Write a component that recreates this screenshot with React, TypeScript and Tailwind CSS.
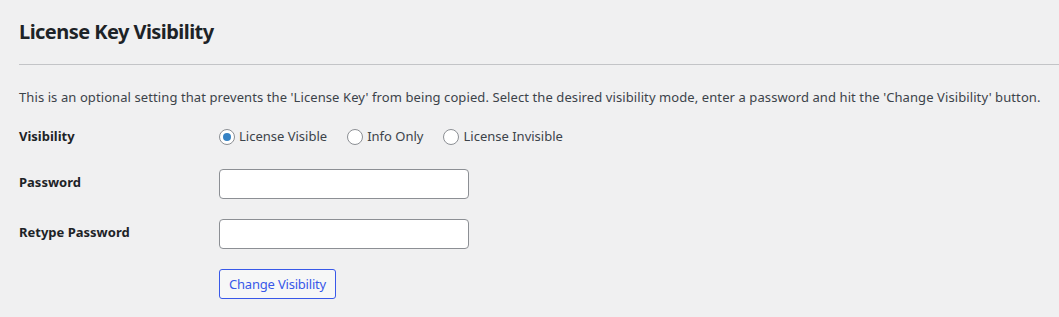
import React from "react";

function Radio({ label, checked }: { label: string; checked?: boolean }) {
  return (
    <label className="flex items-center gap-[4px] mr-[20px]">
      <span className="w-[16px] h-[16px] rounded-full border border-[#8c8f94] bg-white flex items-center justify-center">
        {checked && <span className="w-[8px] h-[8px] rounded-full bg-[#3582c4]" />}
      </span>
      <span>{label}</span>
    </label>
  );
}

export default function App() {
  return (
    <div
      className="w-[1059px] h-[317px] bg-[#f0f0f1] text-[13px] text-[#3c434a] overflow-hidden pl-[19px]"
      style={{ fontFamily: '"Noto Sans", sans-serif' }}
    >
      <h2 className="pt-[18px] text-[20px] leading-[28px] font-bold tracking-[-0.55px] text-[#1d2327]">License Key Visibility</h2>
      <div className="mt-[18px] h-px bg-[#c3c4c7]" />
      <p className="mt-[22px] leading-[20px] tracking-[0.09px]">
        This is an optional setting that prevents the 'License Key' from being copied. Select the desired visibility mode, enter a password and hit the 'Change Visibility' button.
      </p>
      <div className="mt-[20px] flex items-center h-[20px]">
        <div className="w-[200px] font-bold text-[#1d2327]">Visibility</div>
        <div className="flex items-center">
          <Radio label="License Visible" checked />
          <Radio label="Info Only" />
          <Radio label="License Invisible" />
        </div>
      </div>
      <div className="mt-[22px] flex items-start">
        <div className="w-[200px] pt-[5px] leading-[17px] font-bold text-[#1d2327]">Password</div>
        <input type="password" className="w-[250px] h-[30px] border border-[#8c8f94] rounded-[4px] bg-white" />
      </div>
      <div className="mt-[20px] flex items-start">
        <div className="w-[200px] pt-[5px] leading-[17px] font-bold text-[#1d2327]">Retype Password</div>
        <input type="password" className="w-[250px] h-[30px] border border-[#8c8f94] rounded-[4px] bg-white" />
      </div>
      <div className="mt-[20px] flex">
        <div className="w-[200px]" />
        <button className="w-[117px] h-[30px] px-0 border border-[#3858e9] rounded-[3px] bg-[#f6f7f7] text-[#3858e9] text-[13px] leading-[28px] tracking-[-0.2px] text-center whitespace-nowrap">
          Change Visibility
        </button>
      </div>
    </div>
  );
}
